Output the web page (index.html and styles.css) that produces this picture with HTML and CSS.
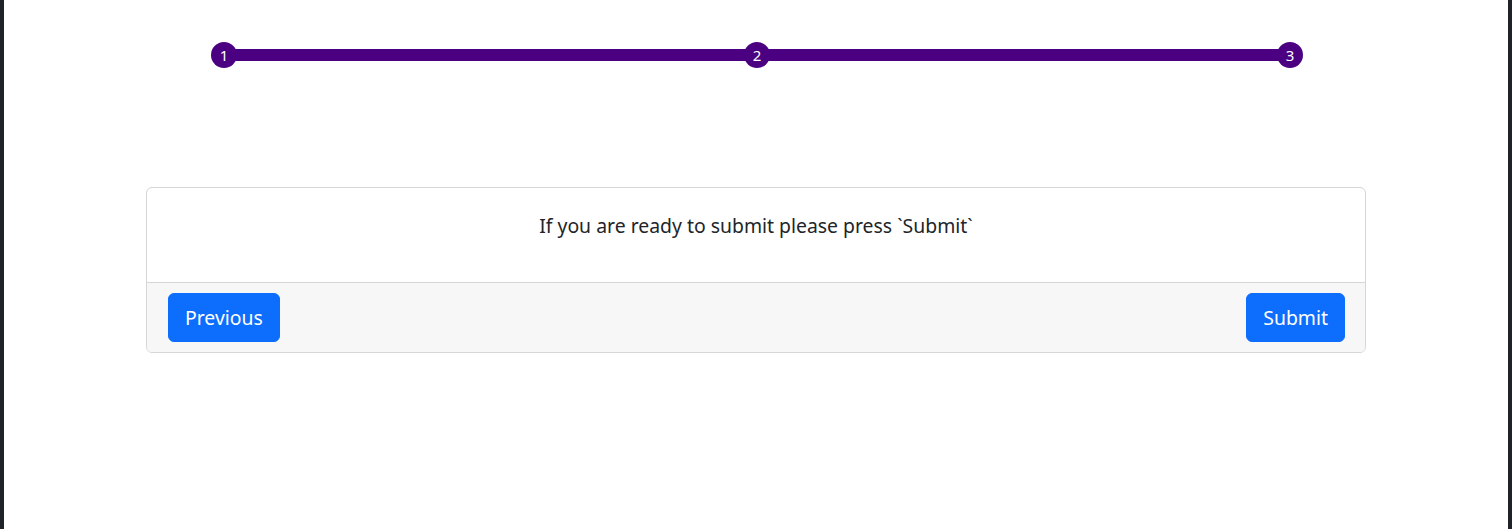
FILE: index.html
```html
<!DOCTYPE html>
<html lang="en">
<head>
<meta charset="utf-8">
<title>Submit</title>
<link rel="stylesheet" href="styles.css">
</head>
<body>
<div class="page">
  <div class="stepper">
    <div class="step">1</div>
    <div class="bar"></div>
    <div class="step">2</div>
    <div class="bar"></div>
    <div class="step">3</div>
  </div>
  <div class="card">
    <div class="card-body">If you are ready to submit please press `Submit`</div>
    <div class="card-footer">
      <button class="btn">Previous</button>
      <button class="btn">Submit</button>
    </div>
  </div>
</div>
</body>
</html>
```
FILE: styles.css
```css
html, body {
  margin: 0;
  padding: 0;
  height: 100%;
}
body {
  background: #1f2227;
  font-family: "Segoe UI", "Noto Sans", "Open Sans", sans-serif;
  color: #212529;
}
.page {
  background: #ffffff;
  margin: 0 4px;
  height: 100%;
  padding-top: 42px;
  box-sizing: border-box;
}
.stepper {
  width: 1092px;
  margin-left: calc(50% - 545px);
  display: flex;
  align-items: center;
}
.step {
  width: 26px;
  height: 26px;
  border-radius: 50%;
  background: #4b0082;
  color: #ffffff;
  font-size: 15px;
  line-height: 26px;
  text-align: center;
  flex: none;
  position: relative;
  z-index: 1;
}
.bar {
  flex: 1;
  height: 12px;
  background: #4b0082;
  margin: 0 -4px;
}
.card {
  width: 1220px;
  margin: 119px auto 0;
  border: 1px solid #d6d6d6;
  border-radius: 6px;
  overflow: hidden;
  box-sizing: border-box;
}
.card-body {
  padding: 23px 16px 41px;
  text-align: center;
  font-size: 19.4px;
  line-height: 30px;
}
.card-footer {
  background: #f7f7f7;
  border-top: 1px solid #d6d6d6;
  padding: 10px 20px 10px 21px;
  display: flex;
  justify-content: space-between;
}
.btn {
  background: #0d6efd;
  color: #ffffff;
  border: 1px solid #0d6efd;
  border-radius: 6px;
  font-family: inherit;
  font-size: 19.4px;
  line-height: 31px;
  padding: 8px 16px;
  cursor: pointer;
}
```
